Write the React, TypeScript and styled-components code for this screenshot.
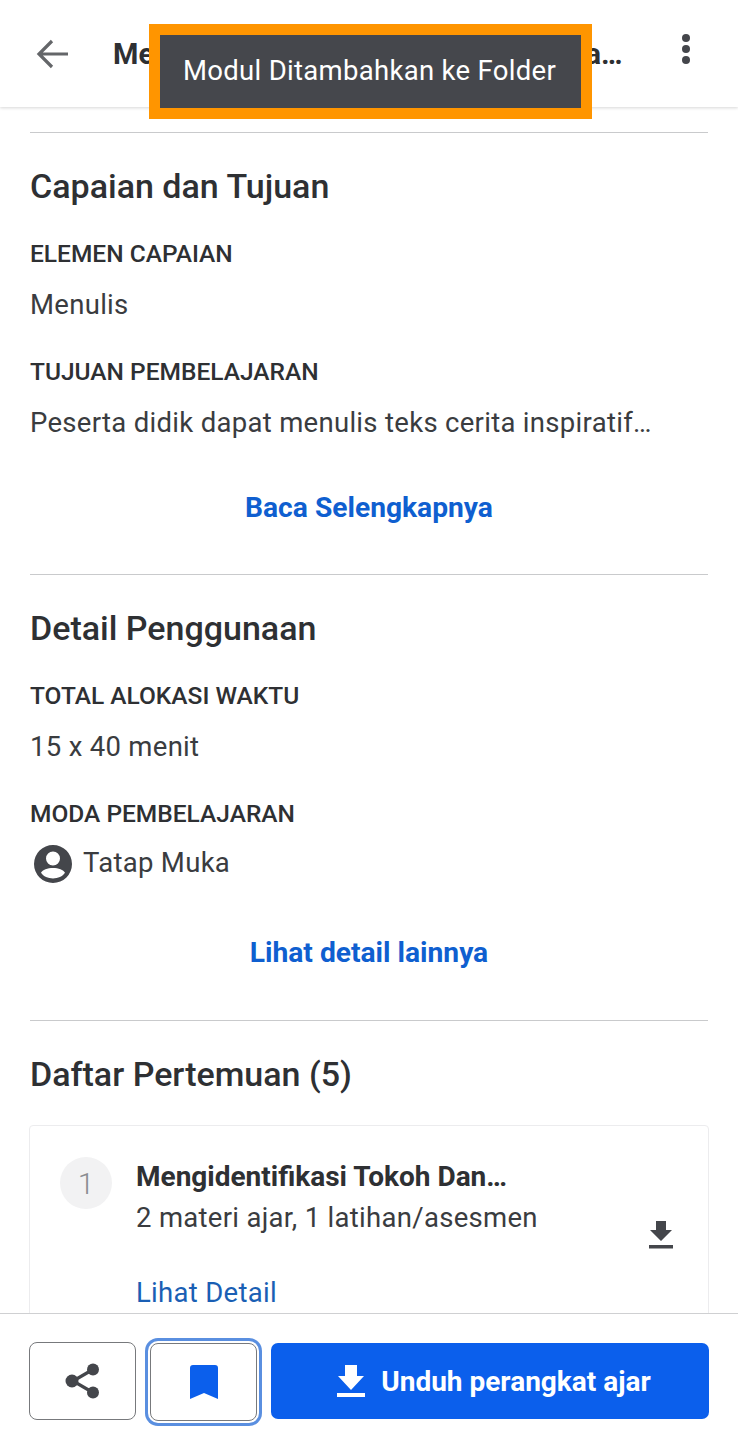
import React from "react";
import styled, { createGlobalStyle } from "styled-components";

const App = () => {
  return (
    <>
      <GlobalStyle />
      <Page>
        <Header>
          <BackButton>
            <svg width="36" height="32" viewBox="0 0 36 32" fill="none">
              <path d="M33 16H4M17 3L4 16l13 13" stroke="#646669" strokeWidth="3.2" />
            </svg>
          </BackButton>
          <HeaderTitle>Menulis Teks Cerita Inspiratif Remaja Masa Kini</HeaderTitle>
          <MoreButton>
            <Dot />
            <Dot />
            <Dot />
          </MoreButton>
        </Header>
        <Toast>Modul Ditambahkan ke Folder</Toast>

        <Content>
          <Section $bottom={48}>
            <Heading>Capaian dan Tujuan</Heading>
            <Label>Elemen Capaian</Label>
            <Body>Menulis</Body>
            <Label $spaced>Tujuan Pembelajaran</Label>
            <Body>Peserta didik dapat menulis teks cerita inspiratif…</Body>
            <MoreLink>Baca Selengkapnya</MoreLink>
          </Section>

          <Section $bottom={49}>
            <Heading>Detail Penggunaan</Heading>
            <Label>Total Alokasi Waktu</Label>
            <Body>15 x 40 menit</Body>
            <Label $spaced>Moda Pembelajaran</Label>
            <ModeRow>
              <svg width="44" height="44" viewBox="0 0 44 44">
                <path
                  fill="#44464b"
                  fillRule="evenodd"
                  d="M22 3a19 19 0 1 0 0 38 19 19 0 0 0 0-38zm0 6.500a7 7 0 1 1 0 14 7 7 0 0 1 0-14zM22 26c5.500 0 10.500 1.800 12 4.800C31.500 34.400 27 36.500 22 36.500S12.500 34.400 10 30.800C11.500 27.800 16.500 26 22 26z"
                />
              </svg>
              <ModeText>Tatap Muka</ModeText>
            </ModeRow>
            <MoreLink>Lihat detail lainnya</MoreLink>
          </Section>

          <Section>
            <Heading>Daftar Pertemuan (5)</Heading>
            <MeetingCard>
              <MeetingNumber>1</MeetingNumber>
              <MeetingInfo>
                <MeetingTitle>Mengidentifikasi Tokoh Dan…</MeetingTitle>
                <MeetingMeta>2 materi ajar, 1 latihan/asesmen</MeetingMeta>
                <DetailLink>Lihat Detail</DetailLink>
              </MeetingInfo>
              <MeetingDownload>
                <svg width="24" height="29" viewBox="0 0 24 29">
                  <path fill="#44464b" d="M7 1h10v9h6L12 21 1 10h6zM0 25h24v3.500H0z" />
                </svg>
              </MeetingDownload>
            </MeetingCard>
          </Section>
        </Content>

        <Footer>
          <IconButton>
            <svg width="38" height="38" viewBox="0 0 38 38">
              <path d="M28 8L9 19l19 11" stroke="#44464b" strokeWidth="3.200" fill="none" />
              <circle cx="29" cy="7.500" r="6" fill="#44464b" />
              <circle cx="8" cy="19" r="6.500" fill="#44464b" />
              <circle cx="29" cy="30.500" r="6" fill="#44464b" />
            </svg>
          </IconButton>
          <IconButton $focused>
            <svg width="28" height="34" viewBox="0 0 28 34">
              <path fill="#0b5fec" d="M3 0h22a3 3 0 0 1 3 3v31l-14-6-14 6V3a3 3 0 0 1 3-3z" />
            </svg>
          </IconButton>
          <PrimaryButton>
            <svg width="28" height="32" viewBox="0 0 28 32">
              <path fill="#fff" d="M8 0h12v11h7L14 25 1 11h7zM0 28h28v4H0z" />
            </svg>
            Unduh perangkat ajar
          </PrimaryButton>
        </Footer>
      </Page>
    </>
  );
};

export default App;

const GlobalStyle = createGlobalStyle`
  html, body {
    margin: 0;
    padding: 0;
    height: 100%;
    overflow: hidden;
    background: #fff;
  }
  body {
    font-family: Roboto, "Liberation Sans", sans-serif;
    color: #36383c;
  }
`;

const Page = styled.div`
  position: relative;
  width: 738px;
  height: 1443px;
  display: flex;
  flex-direction: column;
  overflow: hidden;
`;

const Header = styled.header`
  flex: none;
  height: 107px;
  display: flex;
  align-items: center;
  box-sizing: border-box;
  padding: 0 30px 0 35px;
  background: #fff;
  box-shadow: 0 1px 3px rgba(0, 0, 0, 0.16);
  z-index: 1;
`;

const BackButton = styled.div`
  width: 78px;
  display: flex;
  align-items: center;
`;

const HeaderTitle = styled.div`
  flex: 1;
  min-width: 0;
  margin-right: 30px;
  white-space: nowrap;
  overflow: hidden;
  text-overflow: ellipsis;
  font-size: 29px;
  font-weight: 700;
  color: #2e3033;
`;

const MoreButton = styled.div`
  width: 44px;
  margin-left: 5px;
  display: flex;
  flex-direction: column;
  align-items: center;
  gap: 3px;
  margin-top: -10px;
`;

const Dot = styled.span`
  width: 8px;
  height: 8px;
  border-radius: 50%;
  background: #44464b;
`;

const Toast = styled.div`
  position: absolute;
  top: 24px;
  left: 149px;
  width: 443px;
  height: 95px;
  box-sizing: border-box;
  border: 11px solid #ff9500;
  padding: 0 2px 2px 0;
  background: #45474c;
  color: #fff;
  font-size: 27.5px;
  letter-spacing: 0.3px;
  display: flex;
  align-items: center;
  justify-content: center;
  z-index: 2;
`;

const Content = styled.main`
  flex: 1;
  min-height: 0;
  overflow: hidden;
  padding: 25px 30px 0;
`;

const Section = styled.section<{ $bottom?: number }>`
  border-top: 1px solid #c9cacc;
  padding-top: 30px;
  padding-bottom: ${(p) => p.$bottom ?? 0}px;
`;

const Heading = styled.h2`
  margin: 0 0 28px;
  font-size: 34px;
  line-height: 46px;
  font-weight: 500;
  color: #2e3033;
`;

const Label = styled.div<{ $spaced?: boolean }>`
  margin-top: ${(p) => (p.$spaced ? "32px" : "0")};
  font-size: 24.5px;
  line-height: 34px;
  font-weight: 500;
  text-transform: uppercase;
  color: #2e3033;
`;

const Body = styled.div`
  margin-top: 16px;
  font-size: 27.5px;
  line-height: 36px;
  letter-spacing: 0.3px;
  color: #3a3c40;
`;

const MoreLink = styled.div`
  margin-top: 49px;
  text-align: center;
  font-size: 28.2px;
  line-height: 36px;
  font-weight: 700;
  color: #0f5fd0;
`;

const ModeRow = styled.div`
  margin-top: 11px;
  margin-left: 1px;
  display: flex;
  align-items: center;
  gap: 8px;
`;

const ModeText = styled.span`
  margin-bottom: 4px;
  font-size: 27.5px;
  letter-spacing: 0.3px;
  color: #3a3c40;
`;

const MeetingCard = styled.div`
  margin: 5px -1px 0;
  height: 260px;
  box-sizing: border-box;
  border: 1px solid #ececee;
  border-radius: 4px;
  padding: 31px 35px 0 30px;
  display: flex;
  align-items: flex-start;
`;

const MeetingNumber = styled.div`
  flex: none;
  width: 52px;
  height: 52px;
  border-radius: 50%;
  background: #f2f2f3;
  color: #8a8c90;
  font-size: 30px;
  font-weight: 300;
  display: flex;
  align-items: center;
  justify-content: center;
`;

const MeetingInfo = styled.div`
  flex: 1;
  margin-left: 24px;
`;

const MeetingTitle = styled.div`
  margin-top: 2px;
  font-size: 28px;
  line-height: 36px;
  font-weight: 700;
  color: #2e3033;
`;

const MeetingMeta = styled.div`
  margin-top: 5px;
  font-size: 27.5px;
  line-height: 36px;
  letter-spacing: 0.3px;
  color: #3a3c40;
`;

const DetailLink = styled.div`
  margin-top: 39px;
  font-size: 27.5px;
  line-height: 36px;
  letter-spacing: 0.3px;
  color: #1a5fb4;
`;

const MeetingDownload = styled.div`
  margin-top: 63px;
  width: 24px;
`;

const Footer = styled.footer`
  flex: none;
  height: 130px;
  box-sizing: border-box;
  border-top: 1px solid #cfd0d2;
  background: #fff;
  padding: 28px 29px 0;
  display: flex;
  align-items: flex-start;
  gap: 14px;
  z-index: 1;
`;

const IconButton = styled.div<{ $focused?: boolean }>`
  flex: none;
  width: 107px;
  height: 78px;
  box-sizing: border-box;
  border: 1px solid #77797c;
  border-radius: 8px;
  background: #fff;
  display: flex;
  align-items: center;
  justify-content: center;
  ${(p) => p.$focused && "margin-top: 1px; box-shadow: 0 0 0 2px #fff, 0 0 0 5px #5a8fe0;"}
`;

const PrimaryButton = styled.div`
  flex: 1;
  height: 76px;
  margin-top: 1px;
  padding-left: 8px;
  box-sizing: border-box;
  border-radius: 7px;
  background: #0b5fec;
  color: #fff;
  font-size: 28px;
  font-weight: 700;
  display: flex;
  align-items: center;
  justify-content: center;
  gap: 16px;
`;
